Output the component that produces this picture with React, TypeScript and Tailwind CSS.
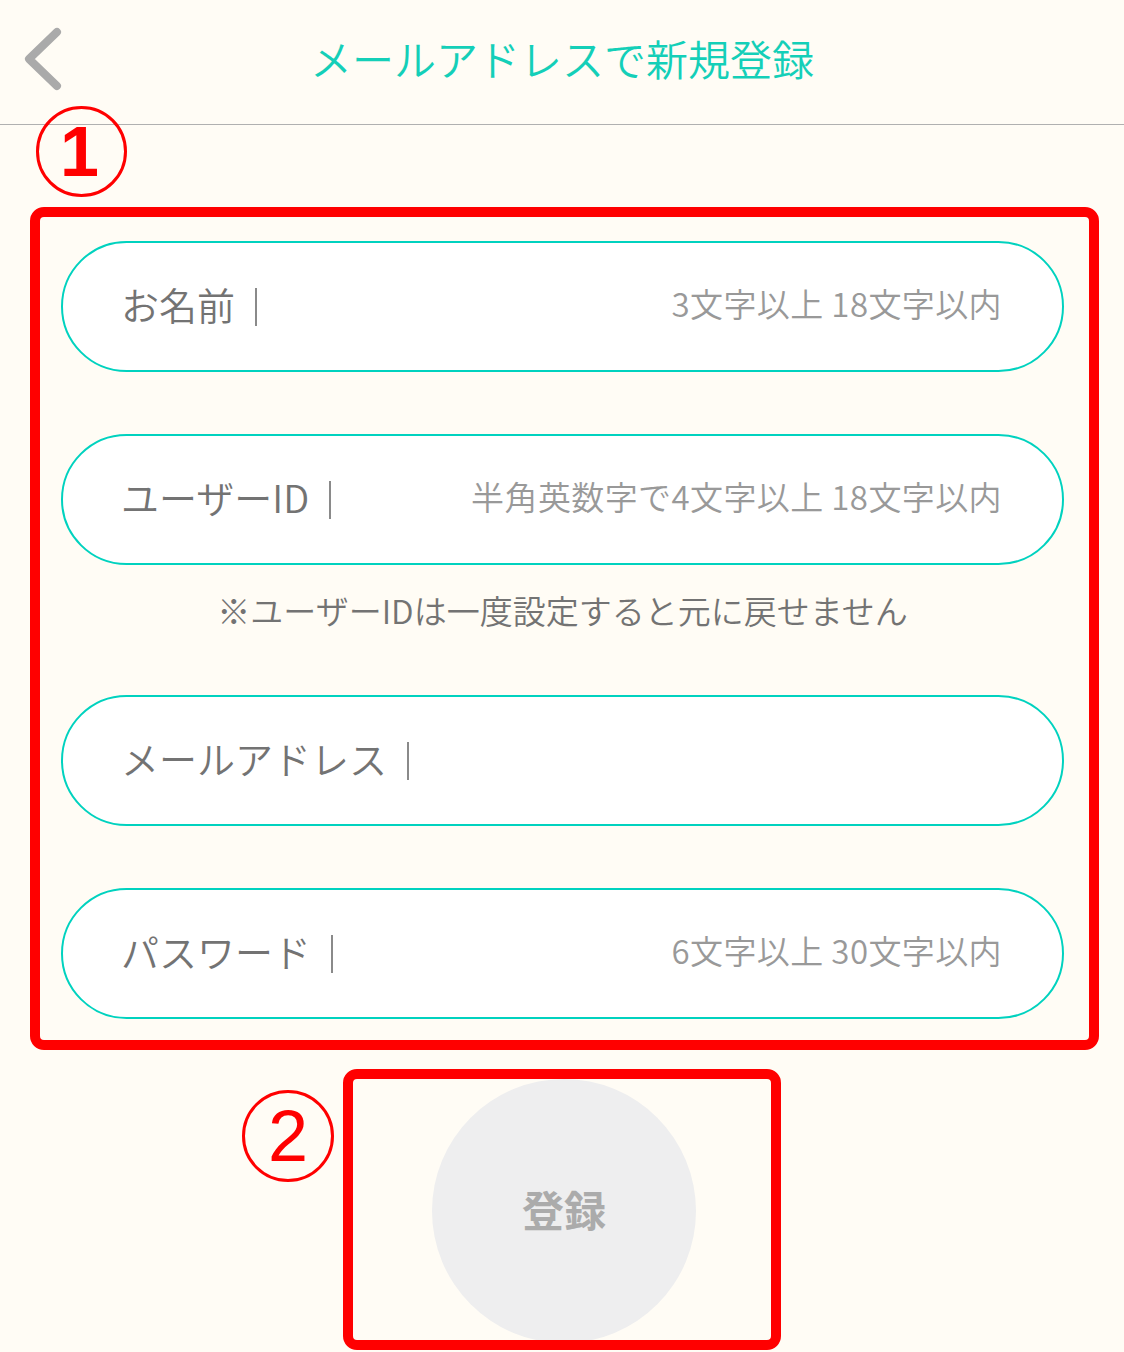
import React from 'react'

const fields = [
  { label: 'お名前', hint: '3文字以上 18文字以内' },
  { label: 'ユーザーID', hint: '半角英数字で4文字以上 18文字以内' },
  { label: 'メールアドレス', hint: '' },
  { label: 'パスワード', hint: '6文字以上 30文字以内' },
]

function Field({ label, hint }: { label: string; hint: string }) {
  return (
    <div className="h-[131px] rounded-full border-2 border-[#00d2bf] bg-white flex items-center pl-[58px] pr-[60px]">
      <span className="pb-[6px] text-[38px] leading-none font-[350] text-[#737373]">{label}</span>
      <span className="ml-[20px] w-[2px] h-[38px] bg-[#8a8a8a]" />
      {hint && (
        <span className="ml-auto pb-[6px] text-[33px] leading-none font-[350] tracking-[0.4px] text-[#999999]">{hint}</span>
      )}
    </div>
  )
}

export default function App() {
  return (
    <div
      className="relative min-h-[1352px] bg-[#fffcf5] overflow-hidden"
      style={{ fontFamily: '"Noto Sans CJK JP", "Noto Sans", sans-serif' }}
    >
      {/* Header */}
      <header className="grid grid-cols-[1fr_auto_1fr] items-center h-[125px] border-b border-[#b0b0b0]">
        <svg viewBox="0 0 48 72" className="w-[48px] h-[72px] ml-[20px] self-start mt-[22px]">
          <path d="M37 10 L9 37 L37 64" fill="none" stroke="#aaaaaa" strokeWidth="8" strokeLinecap="round" strokeLinejoin="round" />
        </svg>
        <h1 className="text-[42px] leading-none font-[350] text-[#14cfb8] -mt-[8px]">メールアドレスで新規登録</h1>
        <div />
      </header>

      {/* Annotation 1 */}
      <div className="absolute left-[36px] top-[106px] w-[91px] h-[91px] rounded-full border-[3px] border-[#ff0000] flex items-center justify-center">
        <span className="text-[70px] leading-none font-bold text-[#ff0000] -ml-[4px]" style={{ fontFamily: '"Liberation Sans", sans-serif' }}>
          1
        </span>
      </div>

      {/* Form fields */}
      <div className="mt-[82px] ml-[30px] w-[1069px] border-[10px] border-[#ff0000] rounded-[14px] pt-[24px] pb-[21px] pl-[21px] pr-[25px] flex flex-col">
        <Field {...fields[0]} />
        <div className="h-[62px]" />
        <Field {...fields[1]} />
        <p className="pt-[21px] pb-[61px] text-center text-[33px] leading-[48px] font-[350] text-[#737373]">
          ※ユーザーIDは一度設定すると元に戻せません
        </p>
        <Field {...fields[2]} />
        <div className="h-[62px]" />
        <Field {...fields[3]} />
      </div>

      {/* Submit */}
      <div className="relative mt-[19px] mx-auto w-[438px] h-[281px] border-[10px] border-[#ff0000] rounded-[14px]">
        <div className="absolute -left-[111px] top-[11px] w-[92px] h-[92px] rounded-full border-[3px] border-[#ff0000] flex items-center justify-center">
          <span className="text-[72px] leading-none text-[#ff0000]" style={{ fontFamily: '"Liberation Sans", sans-serif' }}>
            2
          </span>
        </div>
        <div className="h-full overflow-hidden rounded-[4px] flex justify-center">
          <button className="w-[264px] h-[264px] shrink-0 rounded-full bg-[#eeeeef] flex items-center justify-center ml-[4px]">
            <span className="pb-[4px] text-[42px] leading-none font-bold text-[#ababab]">登録</span>
          </button>
        </div>
      </div>
    </div>
  )
}
